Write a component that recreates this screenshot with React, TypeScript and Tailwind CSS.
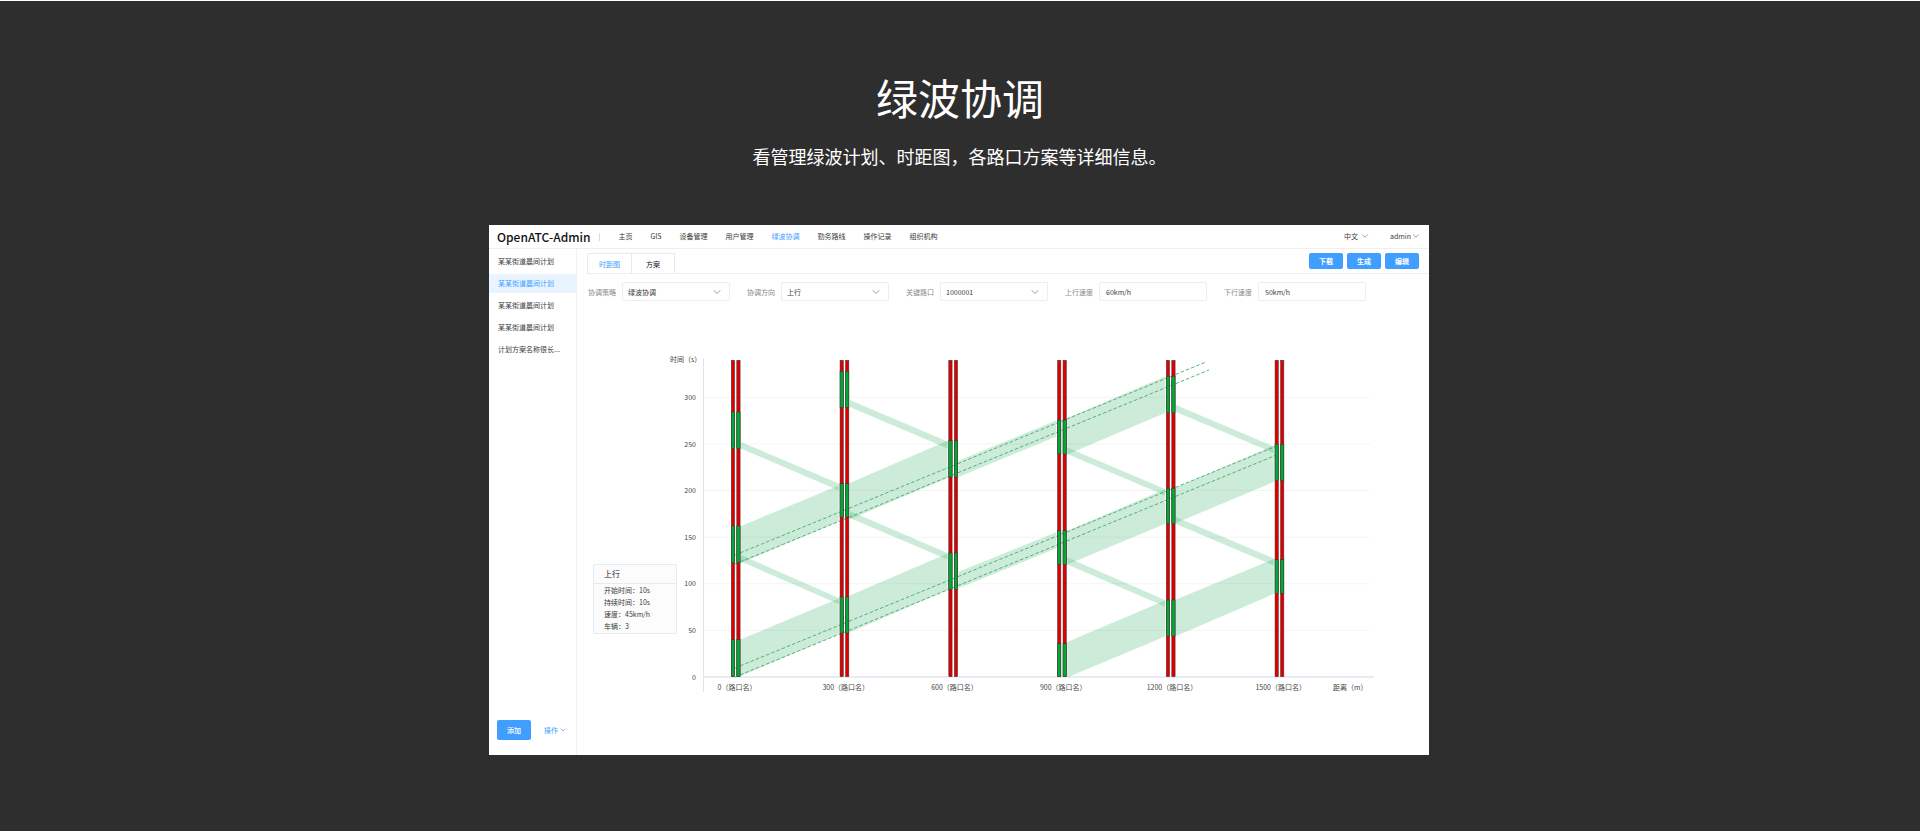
import { ChevronDown } from 'lucide-react'

const navItems = ['主页', 'GIS', '设备管理', '用户管理', '绿波协调', '勤务路线', '操作记录', '组织机构']

const plans = ['某某街道晨间计划', '某某街道晨间计划', '某某街道晨间计划', '某某街道晨间计划', '计划方案名称很长...']

const actions = ['下载', '生成', '编辑']

const filters = [
  { id: 'strategy', label: '协调策略', options: ['绿波协调'] },
  { id: 'direction', label: '协调方向', options: ['上行', '下行'] },
  { id: 'junction', label: '关键路口', options: ['1000001'] },
]

const speeds = [
  { id: 'up-speed', label: '上行速度', value: '60km/h' },
  { id: 'down-speed', label: '下行速度', value: '50km/h' },
]

// Chart geometry, in viewBox units
const TOP = 15
const BASE = 332
const FIRST_X = 154
const STEP = 108.75

const ticks = [
  { value: 300, y: 52.3 },
  { value: 250, y: 99 },
  { value: 200, y: 145.5 },
  { value: 150, y: 192.2 },
  { value: 100, y: 238.8 },
  { value: 50, y: 285.4 },
  { value: 0, y: 332 },
]

// Green phases per junction: [start, end]
const junctions = [
  { distance: 0, green: [[67, 104], [181, 218], [294.7, 332]] },
  { distance: 300, green: [[26.3, 62.7], [138.7, 172.3], [252, 288.3]] },
  { distance: 600, green: [[95.7, 132.3], [208, 244.7]] },
  { distance: 900, green: [[75, 109.3], [185.7, 219.7], [298.7, 332]] },
  { distance: 1200, green: [[31.3, 68], [143.3, 179], [255, 291.3]] },
  { distance: 1500, green: [[99.3, 136], [214.7, 248.7]] },
]

// [from junction, top left, bottom left, top right, bottom right]
const bands = [
  [0, 294.3, 331, 253.5, 289],
  [1, 250.5, 287.5, 208.5, 245],
  [2, 226.7, 243.3, 187.3, 203.3],
  [3, 185.7, 219.5, 144.3, 179],
  [4, 142.5, 178, 100.5, 137],
  [3, 297, 332.5, 255.5, 291.5],
  [4, 254.5, 291, 214, 249],
  [0, 181, 218, 140.5, 176.5],
  [1, 138, 174.5, 95.7, 133],
  [2, 115.7, 132, 75.5, 91.5],
  [3, 73, 109.5, 31.5, 68],
  [0, 97, 103.5, 138.5, 145.5],
  [0, 210, 216.5, 253, 259],
  [1, 55, 62, 96.5, 103.5],
  [1, 166, 173, 208, 214.5],
  [3, 102.5, 109, 144, 150.5],
  [3, 212.5, 219.5, 255, 261.5],
  [4, 60, 67, 101.5, 108],
  [4, 172, 179, 213.5, 220.5],
]

const trajectories = [
  [158, 332, 702, 109],
  [158, 323, 702, 100],
  [158, 210, 629, 17],
  [158, 219, 632, 25],
]

function TimeDistanceChart() {
  return (
    <svg viewBox="0 0 852 350" className="block w-full fill-[#444] text-[7px]" role="img" aria-label="时距图">
      {ticks.map((tick) => (
        <g key={tick.value}>
          {tick.value > 0 && <line x1="127" x2="793" y1={tick.y} y2={tick.y} stroke="#f4f4f6" />}
          <text x="119" y={tick.y + 2.5} textAnchor="end">
            {tick.value}
          </text>
        </g>
      ))}
      <text x="93" y="17">时间（s）</text>
      <line x1="126.5" x2="126.5" y1="13" y2="347" stroke="#dfe4ee" />
      <line x1="126" x2="797" y1={BASE} y2={BASE} stroke="#e8ecf4" strokeWidth="2" />

      {bands.map(([from, topLeft, bottomLeft, topRight, bottomRight], index) => {
        const left = FIRST_X + from * STEP + 10
        const right = FIRST_X + (from + 1) * STEP - 1
        return (
          <polygon
            key={index}
            points={`${left},${topLeft} ${right},${topRight} ${right},${bottomRight} ${left},${bottomLeft}`}
            fill="#00a040"
            fillOpacity="0.2"
          />
        )
      })}

      {trajectories.map(([x1, y1, x2, y2]) => (
        <line key={y1} x1={x1} y1={y1} x2={x2} y2={y2} stroke="#3fae68" strokeWidth="0.9" strokeDasharray="3.6 2" />
      ))}

      {junctions.map((junction, index) => {
        const x = FIRST_X + index * STEP
        return (
          <g key={junction.distance}>
            {[x, x + 5.5].map((barX) => (
              <g key={barX} stroke="#3a3030" strokeWidth="0.5">
                <rect x={barX + 0.3} y={TOP + 0.3} width="3.3" height={BASE - TOP - 0.6} fill="#dc0000" />
                {junction.green.map(([start, end]) => (
                  <rect key={start} x={barX + 0.3} y={start} width="3.3" height={end - start - 0.3} fill="#00a838" />
                ))}
              </g>
            ))}
            <text x={x + 6} y="345" textAnchor="middle">
              {junction.distance}（路口名）
            </text>
          </g>
        )
      })}
      <text x="756" y="345">距离（m）</text>
    </svg>
  )
}

export default function App() {
  return (
    <section className="mt-px mb-1 bg-[#2e2e2e] pt-[66px] pb-[76px] font-['Noto_Sans_CJK_SC',sans-serif]">
      <h1 className="text-center text-[42px] leading-[60px] text-white">绿波协调</h1>
      <p className="mt-[15px] pr-px text-center text-[18px] leading-[28px] text-white">
        看管理绿波计划、时距图，各路口方案等详细信息。
      </p>

      <div className="mt-[55px] pr-[2px]">
        <div className="mx-auto flex w-full max-w-[940px] flex-col bg-white text-[7px] leading-[10px] text-[#3a3a3a]">
          <header className="flex h-6 items-center border-b border-[#eeeff2] pr-2 pl-2">
            <span className="text-[12px] leading-5 font-medium text-[#111]">OpenATC-Admin</span>
            <span className="ml-[9px] h-2 w-px bg-[#dcdcdc]" />
            <nav className="ml-[18px] flex gap-[18px] pb-[2px]">
              {navItems.map((item) => (
                <a key={item} href="#" className={item === '绿波协调' ? 'text-[#409eff]' : ''}>
                  {item}
                </a>
              ))}
            </nav>
            <button className="ml-auto flex items-center gap-[2px] pb-[2px]">
              中文
              <ChevronDown className="size-[10px] text-[#888]" />
            </button>
            <button className="ml-5 flex items-center pb-[2px]">
              admin
              <ChevronDown className="size-[10px] text-[#888]" />
            </button>
          </header>

          <div className="flex">
            <aside className="flex w-[88px] shrink-0 flex-col justify-between border-r border-[#f0f1f4] pt-[3px] pb-[15px]">
              <ul className="flex flex-col gap-[3px]">
                {plans.map((plan, index) => (
                  <li key={index}>
                    <a
                      href="#"
                      className={`block truncate pr-2 pl-[9px] leading-[19px] ${index === 1 ? 'bg-[#eaf4ff] text-[#409eff]' : ''}`}
                    >
                      {plan}
                    </a>
                  </li>
                ))}
              </ul>
              <div className="flex items-center pl-2">
                <button className="h-5 w-[34px] rounded-[2px] bg-[#409eff] font-medium text-white">添加</button>
                <button className="ml-[13px] flex items-center gap-px text-[#409eff]">
                  操作
                  <ChevronDown className="size-2" />
                </button>
              </div>
            </aside>

            <main className="min-w-0 flex-1">
              <div className="ml-[10px] flex items-end justify-between border-b border-[#ebedf1] pt-[4px] pr-[10px]">
                <div className="flex h-5 rounded-t-[2px] border border-b-0 border-[#e6e9ef]" role="tablist">
                  <button role="tab" aria-selected="true" className="w-[43px] text-[#409eff]">
                    时距图
                  </button>
                  <button role="tab" aria-selected="false" className="w-[43px] border-l border-[#e6e9ef] text-[#111]">
                    方案
                  </button>
                </div>
                <div className="mb-1 flex gap-1">
                  {actions.map((action) => (
                    <button key={action} className="h-4 w-[34px] rounded-[2px] bg-[#409eff] font-bold text-white">
                      {action}
                    </button>
                  ))}
                </div>
              </div>

              <form className="mt-2 flex gap-[17px] pl-[11px]">
                {filters.map((filter) => (
                  <div key={filter.id} className="flex items-center gap-[6px]">
                    <label htmlFor={filter.id} className="whitespace-nowrap text-[#888]">
                      {filter.label}
                    </label>
                    <div className="relative">
                      <select
                        id={filter.id}
                        className="block h-[19px] w-[108px] appearance-none rounded-[2px] border border-[#ebedf1] bg-white px-[5px]"
                      >
                        {filter.options.map((option) => (
                          <option key={option}>{option}</option>
                        ))}
                      </select>
                      <ChevronDown className="pointer-events-none absolute top-1 right-[7px] size-3 stroke-[1.5] text-[#777]" />
                    </div>
                  </div>
                ))}
                {speeds.map((speed) => (
                  <div key={speed.id} className="flex items-center gap-[6px]">
                    <label htmlFor={speed.id} className="whitespace-nowrap text-[#888]">
                      {speed.label}
                    </label>
                    <input
                      id={speed.id}
                      defaultValue={speed.value}
                      className="h-[19px] w-[108px] rounded-[2px] border border-[#ebedf1] px-[6px]"
                    />
                  </div>
                ))}
              </form>

              <div className="relative mt-11 pb-[60px]">
                <TimeDistanceChart />
                <div className="absolute top-[219px] left-4 w-[84px] rounded-[2px] border border-[#e9eaed] bg-[#fcfcfc]">
                  <h2 className="border-b border-[#e9eaed] pl-[10px] text-[8px] leading-[18px] text-[#222]">上行</h2>
                  <div className="pb-px pl-[10px] leading-[12px]">
                    <p>开始时间：10s</p>
                    <p>持续时间：10s</p>
                    <p>速度：45km/h</p>
                    <p>车辆：3</p>
                  </div>
                </div>
              </div>
            </main>
          </div>
        </div>
      </div>
    </section>
  )
}
